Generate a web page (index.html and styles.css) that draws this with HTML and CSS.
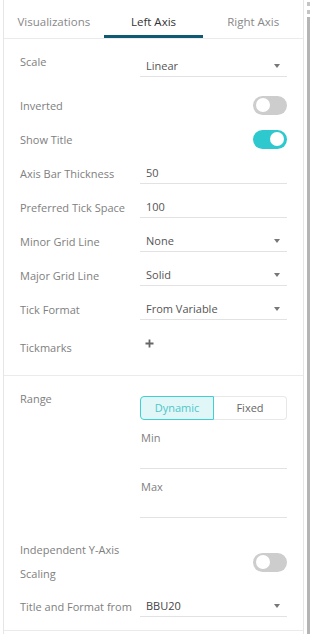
FILE: index.html
```html
<!DOCTYPE html>
<html lang="en">
<head>
  <meta charset="UTF-8" />
  <meta name="viewport" content="width=device-width, initial-scale=1.0" />
  <title>Axis Settings</title>
  <link rel="stylesheet" href="styles.css">
</head>
<body>
  <div class="frame">
    <div class="panel">
      <div class="tabs">
        <div class="tab">Visualizations</div>
        <div class="tab active">Left Axis</div>
        <div class="tab">Right Axis</div>
      </div>

      <div class="section">
        <div class="row row-first">
          <span class="label">Scale</span>
          <div class="field select">Linear</div>
        </div>
        <div class="row">
          <span class="label">Inverted</span>
          <div class="toggle"></div>
        </div>
        <div class="row">
          <span class="label">Show Title</span>
          <div class="toggle on"></div>
        </div>
        <div class="row">
          <span class="label">Axis Bar Thickness</span>
          <div class="field">50</div>
        </div>
        <div class="row">
          <span class="label">Preferred Tick Space</span>
          <div class="field">100</div>
        </div>
        <div class="row">
          <span class="label">Minor Grid Line</span>
          <div class="field select">None</div>
        </div>
        <div class="row">
          <span class="label">Major Grid Line</span>
          <div class="field select">Solid</div>
        </div>
        <div class="row">
          <span class="label">Tick Format</span>
          <div class="field select">From Variable</div>
        </div>
        <div class="row row-ticks">
          <span class="label">Tickmarks</span>
          <svg class="plus" width="9" height="9" viewBox="0 0 9 9">
            <path d="M4.5 0.5v8M0.5 4.5h8" stroke="#666" stroke-width="1.8" fill="none" />
          </svg>
        </div>
      </div>

      <div class="section section-range">
        <div class="row-range">
          <span class="label">Range</span>
          <div class="range-box">
            <div class="segmented">
              <div class="seg active">Dynamic</div>
              <div class="seg">Fixed</div>
            </div>
            <div class="sub-label">Min</div>
            <div class="sub-input"></div>
            <div class="sub-label">Max</div>
            <div class="sub-input"></div>
          </div>
        </div>
      </div>

      <div class="section section-last">
        <div class="row row-tall">
          <span class="label">Independent Y-Axis Scaling</span>
          <div class="toggle"></div>
        </div>
        <div class="row">
          <span class="label">Title and Format from</span>
          <div class="field select dark">BBU20</div>
        </div>
      </div>
    </div>
    <div class="scrollbar"></div>
  </div>
</body>
</html>
```

FILE: styles.css
```css
body { margin: 0; font-family: "Open Sans", "Liberation Sans", sans-serif; font-size: 11px; color: #808080; background: #fff; }
.frame { display: flex; height: 634px; padding-left: 3px; }
.panel { width: 299px; border-left: 1px solid #e6e6e6; border-right: 1px solid #e6e6e6; }

.tabs { display: flex; height: 38px; border-bottom: 1px solid #ebebeb; }
.tab { flex: 1; box-sizing: border-box; height: 38px; padding-top: 9px; line-height: 26px; text-align: center; font-size: 11.5px; color: #888; border-bottom: 3px solid transparent; }
.tab.active { color: #333; border-bottom-color: #0e5a72; }

.section { padding: 0 16px; border-bottom: 1px solid #ebebeb; }
.row { display: flex; align-items: center; height: 34px; }
.label { width: 120px; flex-shrink: 0; }
.field { flex: 1; box-sizing: border-box; height: 22px; line-height: 22px; padding: 0 7px 0 6px; color: #555; border-bottom: 1px solid #e2e2e2; display: flex; justify-content: space-between; align-items: center; }
.field.dark { color: #444; }
.select::after { content: ""; border-left: 3.5px solid transparent; border-right: 3.5px solid transparent; border-top: 4px solid #777; }

.row-first { margin-top: 6px; height: 43px; align-items: flex-start; }
.row-first .label { line-height: 34px; }
.row-first .field { margin-top: 10px; }

.row-ticks { height: 49px; align-items: flex-start; }
.row-ticks .label { line-height: 24px; margin-top: 10px; }
.plus { margin: 13px 0 0 5px; }

.toggle { margin-left: auto; width: 34px; height: 19px; box-sizing: border-box; padding: 0 3px; border-radius: 10px; background: #cdcdcd; display: flex; align-items: center; }
.toggle::after { content: ""; width: 14px; height: 14px; border-radius: 50%; background: #fff; }
.toggle.on { background: #2dc9cf; justify-content: flex-end; }

.section-range { border-bottom: none; }
.row-range { display: flex; align-items: flex-start; }
.row-range .label { line-height: 24px; margin-top: 11px; }
.range-box { flex: 1; margin-top: 20px; }
.segmented { display: flex; height: 24px; }
.seg { flex: 1; box-sizing: border-box; line-height: 22px; text-align: center; color: #666; border: 1px solid #e8e8e8; border-left: none; border-radius: 0 4px 4px 0; }
.seg.active { color: #4fc6cb; background: #e0f6f7; border: 1px solid #3fcfd4; border-radius: 4px 0 0 4px; }
.sub-label { line-height: 20px; margin-top: 8px; padding-left: 1px; color: #808080; }
.sub-input { height: 20px; border-bottom: 1px solid #e2e2e2; }

.section-last { padding-top: 20px; padding-bottom: 7px; }
.row-tall { height: 48px; }
.row-tall .label { line-height: 24px; width: 100px; }
.section-last .row-tall + .row { margin-top: 3px; }

.scrollbar { width: 3px; margin-left: 3px; background: linear-gradient(#b5b5b5, #b5b5b5) 0 17px / 100% 100% no-repeat, repeating-linear-gradient(#c4c4c4 0 4px, transparent 4px 8px) 0 2px / 100% 14px no-repeat; }
```
